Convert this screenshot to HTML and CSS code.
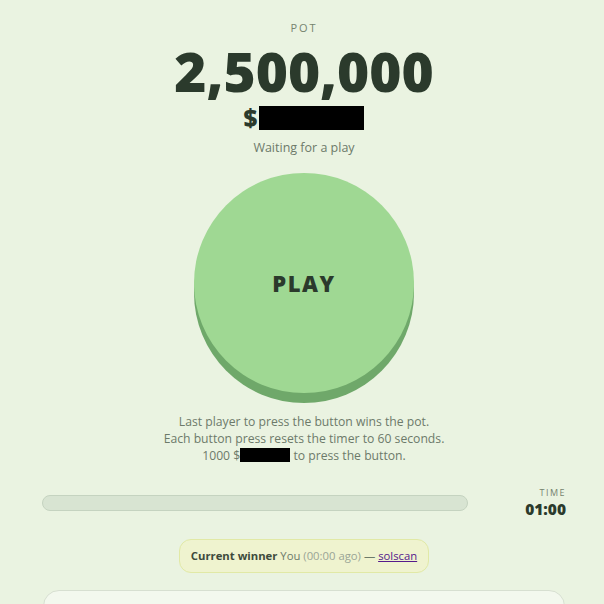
FILE: index.html
```html
<!DOCTYPE html>
<html>
<head>
<meta charset="utf-8">
<link rel="stylesheet" href="styles.css">
</head>
<body>
<main class="page">
  <section class="pot">
    <div class="pot-label">POT</div>
    <div class="pot-amount">2,500,000</div>
    <div class="pot-token">$<span class="redact redact-big"></span></div>
    <div class="status">Waiting for a play</div>
  </section>
  <button class="play-btn">PLAY</button>
  <div class="rules">
    <p>Last player to press the button wins the pot.</p>
    <p>Each button press resets the timer to 60 seconds.</p>
    <p>1000 $<span class="redact redact-small"></span> to press the button.</p>
  </div>
  <div class="timer-row">
    <div class="bar"><div class="bar-fill" style="width:0%"></div></div>
    <div class="time">
      <div class="time-label">TIME</div>
      <div class="time-value">01:00</div>
    </div>
  </div>
  <div class="winner">
    <strong>Current winner</strong> You <span class="ago">(00:00 ago)</span> — <a href="#">solscan</a>
  </div>
  <div class="card"></div>
</main>
</body>
</html>
```

FILE: styles.css
```css
html, body {
  margin: 0;
  padding: 0;
  background: #eaf3e1;
  font-family: "Open Sans", "Noto Sans", sans-serif;
  color: #2b3a2c;
  overflow: hidden;
}
.page {
  width: 524px;
  margin: 0 auto;
  padding: 20px 0 0 4px;
  display: flex;
  flex-direction: column;
  align-items: center;
}
.pot {
  display: flex;
  flex-direction: column;
  align-items: center;
}
.pot-label {
  font-size: 11px;
  letter-spacing: 2px;
  color: #76836f;
  line-height: 16px;
}
.pot-amount {
  font-size: 55px;
  font-weight: 800;
  line-height: 60px;
  color: #2b3a2c;
  margin-top: 5px;
}
.pot-token {
  display: flex;
  align-items: center;
  font-size: 24px;
  font-weight: 800;
  line-height: 28px;
  color: #2b3a2c;
  margin-top: 3px;
}
.redact {
  display: inline-block;
  background: #000;
}
.redact-big {
  width: 105px;
  height: 24px;
  margin-left: 2px;
}
.redact-small {
  width: 50px;
  height: 14px;
  vertical-align: -2px;
}
.status {
  font-size: 12.5px;
  color: #6d7a6a;
  line-height: 18px;
  margin-top: 7px;
}
.play-btn {
  margin-top: 16px;
  width: 220px;
  height: 220px;
  border-radius: 50%;
  border: none;
  background: #9fd893;
  box-shadow: 0 10px 0 #6fa86a;
  font-family: "Open Sans", sans-serif;
  font-size: 22px;
  font-weight: 800;
  letter-spacing: 1.5px;
  color: #2b3a2c;
  padding: 0;
}
.rules {
  margin-top: 20px;
  text-align: center;
  font-size: 12.2px;
  line-height: 17px;
  color: #6d7a6a;
}
.rules p { margin: 0; }
.timer-row {
  margin-top: 23px;
  width: 100%;
  display: flex;
  align-items: center;
  gap: 57px;
}
.bar {
  flex: 1;
  height: 14px;
  border-radius: 8px;
  background: #d8e4d2;
  border: 1px solid #c5d3c0;
}
.time {
  display: flex;
  flex-direction: column;
  align-items: flex-end;
}
.time-label {
  font-size: 9px;
  letter-spacing: 1.5px;
  color: #76836f;
  line-height: 12px;
}
.time-value {
  font-size: 15.5px;
  font-weight: 800;
  line-height: 20px;
  color: #2b3a2c;
}
.winner {
  margin-top: 20px;
  background: #eff3cf;
  border: 1px solid #e1e9a6;
  border-radius: 12px;
  padding: 8px 11px;
  font-size: 11.3px;
  line-height: 16px;
  color: #6d7a6a;
}
.winner strong { color: #3d4a3c; font-weight: 700; }
.winner .ago { color: #9aa596; }
.winner a { color: #551a8b; }
.card {
  margin-top: 17px;
  width: 520px;
  height: 60px;
  background: #f3f8ee;
  border: 1px solid #d7dfd1;
  border-radius: 16px;
}
```
